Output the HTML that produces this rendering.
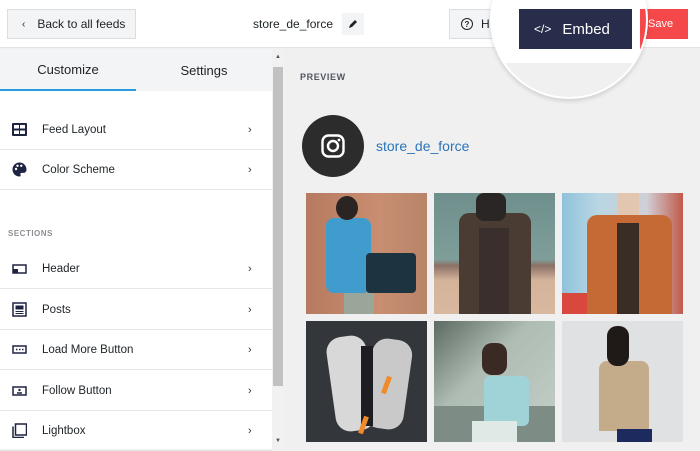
<!DOCTYPE html>
<html><head><meta charset="utf-8"><style>
*{box-sizing:border-box;margin:0;padding:0}
body{width:700px;height:449px;overflow:hidden;font-family:"Liberation Sans",sans-serif;background:#f0f0f1;position:relative;color:#1d2327}
.abs{position:absolute}
.top{left:0;top:0;width:700px;height:48px;background:#fff;border-bottom:1px solid #e4e4e7}
.btn{position:absolute;background:#f3f4f6;border:1px solid #dcdde1;font-size:12px;display:flex;align-items:center}
.side{left:0;top:49px;width:272px;height:400px;background:#fff}
.tabs{height:42px;background:#f3f4f6;display:flex;font-size:13px}
.tab{width:136px;display:flex;align-items:center;justify-content:center}
.item{position:absolute;left:0;width:272px;height:40px;border-bottom:1px solid #e6e7ea;display:flex;align-items:center;font-size:11.5px}
.item .ic{position:absolute;left:12px;width:15px;height:13px}
.item .t{position:absolute;left:42px}
.item .ch{position:absolute;left:248px;font-size:11px;color:#333}
.ph{position:absolute;width:121px;height:121px;overflow:hidden}
</style></head><body>
<div class="abs top"></div>
<div class="btn" style="left:7px;top:9px;width:129px;height:30px;"><span style="margin-left:14px;font-size:10px">&#8249;</span><span style="margin-left:12px">Back to all feeds</span></div>
<div class="abs" style="left:253px;top:17px;font-size:12px">store_de_force</div>
<div class="btn" style="left:342px;top:13px;width:22px;height:22px;border:none;justify-content:center"><svg width="12" height="12" viewBox="0 0 12 12"><path d="M2 10l1-3 5-5 2 2-5 5z" fill="#222"/></svg></div>
<div class="btn" style="left:449px;top:9px;width:60px;height:30px"><span style="margin-left:11px;width:12px;height:12px;border:1.5px solid #222;border-radius:50%;font-size:8px;display:flex;align-items:center;justify-content:center;font-weight:bold">?</span><span style="margin-left:8px">H</span></div>
<div class="abs" style="left:643px;top:9px;width:45px;height:30px;background:#f5484a;color:#fff;font-size:11px;padding:9px 0 0 5px">Save</div>
<div class="abs" style="left:490px;top:-59px;width:158px;height:158px;border-radius:50%;overflow:hidden;background:#f0f0f1;box-shadow:0 2px 5px rgba(0,0,0,.15);border:2px solid #fff">
 <div class="abs" style="left:0;top:0;width:158px;height:120px;background:#fff"></div>
 <div class="abs" style="left:-20px;top:66px;width:14px;height:40px;background:#f3f4f6;border-right:1px solid #ddd"></div>
 <div class="abs" style="left:27px;top:66px;width:113px;height:40px;background:#272d4a;color:#fff;font-size:15px;display:flex;align-items:center"><span style="margin-left:15px;font-size:12px">&lt;/&gt;</span><span style="margin-left:11px">Embed</span></div>
 <div class="abs" style="left:148px;top:66px;width:20px;height:40px;background:#f5484a"></div>
</div>
<div class="abs side">
 <div class="tabs"><div class="tab" style="border-bottom:2px solid #2b9be0">Customize</div><div class="tab">Settings</div></div>
 <div class="item" style="top:61px"><svg class="ic" viewBox="0 0 15 13"><rect x="0" y="0" width="15" height="13" rx="1" fill="#1e2340"/><rect x="2" y="2" width="5" height="3.5" fill="#fff"/><rect x="8" y="2" width="5" height="3.5" fill="#fff"/><rect x="2" y="7.5" width="5" height="3.5" fill="#fff"/><rect x="8" y="7.5" width="5" height="3.5" fill="#fff"/></svg><span class="t">Feed Layout</span><span class="ch">&#8250;</span></div>
 <div class="item" style="top:101px"><svg class="ic" viewBox="0 0 15 15" style="height:15px"><path d="M7.5 0.5a7 7 0 1 0 0 14c1.2 0 1.5-1 1-1.8-.5-.9 0-1.8 1-1.8h1.8a3.2 3.2 0 0 0 3.2-3.2C14.5 3.5 11.4.5 7.5.5z" fill="#1e2340"/><circle cx="4" cy="7" r="1.2" fill="#fff"/><circle cx="5.5" cy="3.8" r="1.2" fill="#fff"/><circle cx="9.3" cy="3.8" r="1.2" fill="#fff"/></svg><span class="t">Color Scheme</span><span class="ch">&#8250;</span></div>
 <div class="abs" style="left:8px;top:180px;font-size:8px;color:#8c8f94;letter-spacing:.5px;font-weight:bold">SECTIONS</div>
 <div class="item" style="top:200px"><svg class="ic" viewBox="0 0 15 13"><rect x="1" y="3" width="13" height="8" fill="none" stroke="#1e2340" stroke-width="1.5"/><rect x="1" y="7" width="5" height="4" fill="#1e2340"/></svg><span class="t">Header</span><span class="ch">&#8250;</span></div>
 <div class="item" style="top:241px"><svg class="ic" viewBox="0 0 15 15" style="height:15px"><rect x="1" y="1" width="13" height="13" fill="none" stroke="#1e2340" stroke-width="1.5"/><rect x="3.5" y="3.5" width="8" height="4" fill="#1e2340"/><path d="M3.5 9.5h8M3.5 11.5h8" stroke="#1e2340"/></svg><span class="t">Posts</span><span class="ch">&#8250;</span></div>
 <div class="item" style="top:281px"><svg class="ic" viewBox="0 0 15 13"><rect x="1" y="3" width="13" height="7" fill="none" stroke="#1e2340" stroke-width="1.5"/><path d="M4 6.5h1.5M7 6.5h1.5M10 6.5h1.5" stroke="#1e2340" stroke-width="1.5"/></svg><span class="t">Load More Button</span><span class="ch">&#8250;</span></div>
 <div class="item" style="top:322px"><svg class="ic" viewBox="0 0 15 13"><rect x="1" y="3" width="13" height="8" fill="none" stroke="#1e2340" stroke-width="1.5"/><circle cx="7.5" cy="6" r="1.2" fill="#1e2340"/><path d="M5 9h5" stroke="#1e2340" stroke-width="1.5"/></svg><span class="t">Follow Button</span><span class="ch">&#8250;</span></div>
 <div class="item" style="top:362px"><svg class="ic" viewBox="0 0 15 15" style="height:15px"><rect x="3.5" y="1" width="11" height="11" fill="none" stroke="#1e2340" stroke-width="1.5"/><path d="M1 3.5v11h11" fill="none" stroke="#1e2340" stroke-width="1.5"/></svg><span class="t">Lightbox</span><span class="ch">&#8250;</span></div>
</div>
<div class="abs" style="left:272px;top:49px;width:12px;height:400px;background:#f1f1f1"></div>
<div class="abs" style="left:273px;top:67px;width:10px;height:319px;background:#c1c1c1"></div>
<div class="abs" style="left:275px;top:54px;font-size:6px;color:#555">&#9650;</div>
<div class="abs" style="left:275px;top:438px;font-size:6px;color:#555">&#9660;</div>
<div class="abs" style="left:300px;top:72px;font-size:9px;color:#50575e;font-weight:bold;letter-spacing:.6px">PREVIEW</div>
<div class="abs" style="left:302px;top:115px;width:62px;height:62px;border-radius:50%;background:#2c2c2c"></div>
<svg class="abs" style="left:321px;top:134px" width="24" height="24" viewBox="0 0 24 24"><rect x="1.5" y="1.5" width="21" height="21" rx="6" fill="none" stroke="#fff" stroke-width="2.4"/><circle cx="12" cy="12" r="5" fill="none" stroke="#fff" stroke-width="2.4"/><circle cx="18" cy="6" r="1.4" fill="#fff"/></svg>
<div class="abs" style="left:376px;top:138px;font-size:14px;color:#2a74b8">store_de_force</div>
<div class="ph" style="left:306px;top:193px;background:linear-gradient(90deg,#b57a5f,#c98e72 60%,#b88468)">
 <div class="abs" style="left:20px;top:25px;width:45px;height:75px;background:#3f9ccc;border-radius:8px"></div>
 <div class="abs" style="left:30px;top:3px;width:22px;height:24px;background:#2a2522;border-radius:50%"></div>
 <div class="abs" style="left:60px;top:60px;width:50px;height:40px;background:#1d3340;border-radius:4px"></div>
 <div class="abs" style="left:38px;top:100px;width:30px;height:21px;background:#9aa69a"></div>
</div>
<div class="ph" style="left:434px;top:193px;background:linear-gradient(180deg,#6e8f8c 0%,#7f9e9a 55%,#8a7066 60%,#d3b39a 72%,#d8b9a0)">
 <div class="abs" style="left:25px;top:20px;width:72px;height:101px;background:#4a3c33;border-radius:10px 10px 0 0"></div>
 <div class="abs" style="left:42px;top:0;width:30px;height:28px;background:#2a2626;border-radius:8px"></div>
 <div class="abs" style="left:45px;top:35px;width:30px;height:86px;background:#3a2f2c"></div>
</div>
<div class="ph" style="left:562px;top:193px;background:linear-gradient(90deg,#8fc3dc,#b9d6e3 30%,#d0cfd6 70%,#c05a4a)">
 <div class="abs" style="left:25px;top:22px;width:85px;height:99px;background:#c66a35;border-radius:10px 10px 0 0"></div>
 <div class="abs" style="left:55px;top:30px;width:22px;height:91px;background:#3a2d26"></div>
 <div class="abs" style="left:55px;top:0;width:22px;height:22px;background:#e2c6b0"></div>
 <div class="abs" style="left:0;top:100px;width:25px;height:21px;background:#d9483c"></div>
</div>
<div class="ph" style="left:306px;top:321px;background:#33363b">
 <div class="abs" style="left:25px;top:15px;width:40px;height:95px;background:#d8d8d8;border-radius:15px;transform:rotate(-8deg)"></div>
 <div class="abs" style="left:62px;top:18px;width:40px;height:90px;background:#c9c9c9;border-radius:15px;transform:rotate(8deg)"></div>
 <div class="abs" style="left:55px;top:25px;width:12px;height:80px;background:#1c1e22"></div>
 <div class="abs" style="left:78px;top:55px;width:5px;height:18px;background:#f08a2a;transform:rotate(20deg)"></div>
 <div class="abs" style="left:55px;top:95px;width:5px;height:18px;background:#f08a2a;transform:rotate(20deg)"></div>
</div>
<div class="ph" style="left:434px;top:321px;background:linear-gradient(135deg,#5d6a62,#aebcb3 40%,#c5d0c8)">
 <div class="abs" style="left:0;top:85px;width:121px;height:36px;background:#7e8c86"></div>
 <div class="abs" style="left:50px;top:55px;width:45px;height:50px;background:#9fd3d8;border-radius:6px"></div>
 <div class="abs" style="left:48px;top:22px;width:25px;height:32px;background:#3b2a24;border-radius:10px"></div>
 <div class="abs" style="left:38px;top:100px;width:45px;height:21px;background:#dfe9e6"></div>
</div>
<div class="ph" style="left:562px;top:321px;background:#dfe1e2">
 <div class="abs" style="left:37px;top:40px;width:50px;height:70px;background:#c4ab8a;border-radius:8px 8px 0 0"></div>
 <div class="abs" style="left:45px;top:5px;width:22px;height:40px;background:#1f1a18;border-radius:10px"></div>
 <div class="abs" style="left:55px;top:108px;width:35px;height:13px;background:#1d2a5e"></div>
</div>
</body></html>
